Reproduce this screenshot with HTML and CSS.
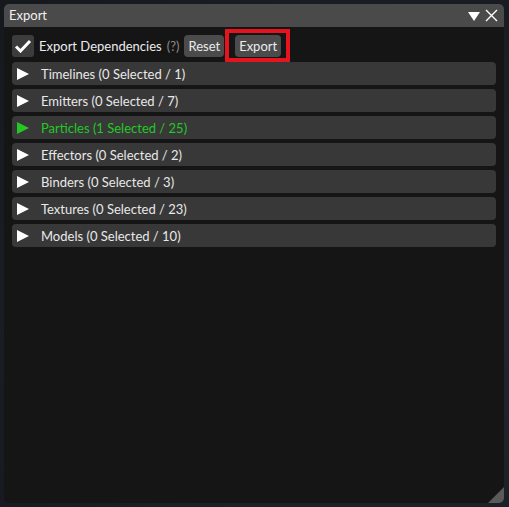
FILE: index.html
```html
<!DOCTYPE html>
<html>
<head>
<meta charset="utf-8">
<link rel="stylesheet" href="styles.css">
</head>
<body>
<div class="window">
  <div class="titlebar">
    <span class="title">Export</span>
    <div class="title-icons">
      <svg width="14" height="12" viewBox="0 0 14 12"><polygon points="1,2 13,2 7,11" fill="#fff"/></svg>
      <svg width="13" height="13" viewBox="0 0 13 13"><path d="M1 1L12 12M12 1L1 12" stroke="#fff" stroke-width="1.4"/></svg>
    </div>
  </div>
  <div class="content">
    <div class="toolbar">
      <span class="checkbox">
        <svg width="18" height="14" viewBox="0 0 18 14"><path d="M2 7.5L6.5 12L16 2" stroke="#fff" stroke-width="3" fill="none"/></svg>
      </span>
      <span class="label">Export Dependencies</span>
      <span class="hint">(?)</span>
      <button class="btn reset">Reset</button>
      <button class="btn export">Export<span class="highlight"></span></button>
    </div>
    <div class="list">
      <div class="row"><span class="arrow"></span>Timelines (0 Selected / 1)</div>
      <div class="row"><span class="arrow"></span>Emitters (0 Selected / 7)</div>
      <div class="row active"><span class="arrow"></span>Particles (1 Selected / 25)</div>
      <div class="row"><span class="arrow"></span>Effectors (0 Selected / 2)</div>
      <div class="row"><span class="arrow"></span>Binders (0 Selected / 3)</div>
      <div class="row"><span class="arrow"></span>Textures (0 Selected / 23)</div>
      <div class="row"><span class="arrow"></span>Models (0 Selected / 10)</div>
    </div>
  </div>
  <span class="grip"></span>
</div>
</body>
</html>
```
FILE: styles.css
```css
html, body {
  margin: 0;
  padding: 0;
}
body {
  width: 509px;
  height: 507px;
  background: radial-gradient(ellipse at 70% 60%, #262b33 0%, #1b1f26 60%, #15181d 100%);
  font-family: Lato, "Noto Sans", sans-serif;
  font-size: 13px;
  color: #ececec;
  padding: 4px 5px 4px 4px;
  box-sizing: border-box;
}
.window {
  position: relative;
  height: 499px;
  background: #151515;
  border-radius: 5px;
  display: flex;
  flex-direction: column;
  overflow: hidden;
}
.titlebar {
  height: 23px;
  background: #4a4a4a;
  display: flex;
  align-items: center;
  justify-content: space-between;
  padding: 0 6px 0 5px;
  flex-shrink: 0;
}
.title {
  color: #f0f0f0;
  line-height: 23px;
}
.title-icons {
  display: flex;
  align-items: center;
  gap: 4px;
}
.content {
  padding: 8px 8px 0 8px;
}
.toolbar {
  display: flex;
  align-items: center;
  height: 22px;
  margin-bottom: 5px;
}
.checkbox {
  width: 22px;
  height: 22px;
  background: #3c3c3c;
  border-radius: 3px;
  display: flex;
  align-items: center;
  justify-content: center;
  margin-right: 5px;
}
.label {
  color: #ececec;
}
.hint {
  color: #8a8a8a;
  margin-left: 5px;
}
.btn {
  font: inherit;
  color: #ececec;
  background: #4b4b4b;
  border: none;
  border-radius: 4px;
  height: 22px;
  padding: 0 4px;
  position: relative;
}
.reset {
  margin-left: 5px;
}
.export {
  margin-left: 11px;
}
.highlight {
  position: absolute;
  left: -10px;
  right: -9px;
  top: -6px;
  bottom: -5px;
  border: 4px solid #e5141e;
}
.list {
  display: flex;
  flex-direction: column;
  gap: 4px;
}
.row {
  height: 23px;
  background: #383838;
  border-radius: 4px;
  display: flex;
  align-items: center;
  color: #e8e8e8;
}
.row.active {
  color: #22c824;
}
.arrow {
  width: 0;
  height: 0;
  border-top: 6px solid transparent;
  border-bottom: 6px solid transparent;
  border-left: 12px solid #fff;
  margin-left: 5px;
  margin-right: 12px;
}
.row.active .arrow {
  border-left-color: #22c824;
}
.grip {
  position: absolute;
  right: 0;
  bottom: 0;
  width: 0;
  height: 0;
  border-left: 16px solid transparent;
  border-bottom: 16px solid #5a5a5a;
}
```
